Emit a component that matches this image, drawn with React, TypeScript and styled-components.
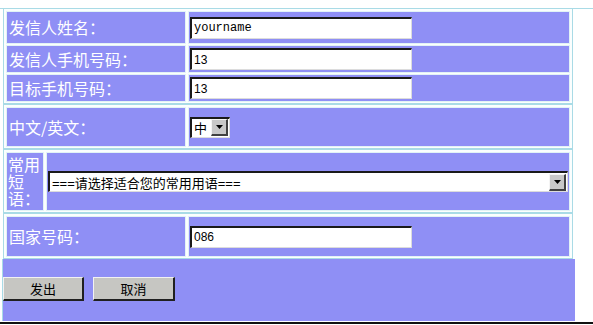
import styled, { createGlobalStyle } from "styled-components";

const GlobalStyle = createGlobalStyle`
  body {
    margin: 0;
    background: #ffffff;
    font-family: "Noto Sans CJK SC", "Liberation Sans", sans-serif;
  }
`;

const purple = "#8f8ff5";
const edge = "#a9dbe6";

const Page = styled.div`
  width: 593px;
  height: 325px;
  overflow: hidden;
  padding-top: 8px;
  box-sizing: border-box;
  display: flex;
  flex-direction: column;
  position: relative;
`;

const TopRule = styled.div`
  position: absolute;
  top: 8px;
  left: 0;
  right: 0;
  height: 1px;
  background: ${edge};
`;

const Section = styled.div<{ $labelWidth?: number }>`
  margin-left: 3px;
  width: 570px;
  box-sizing: border-box;
  border: 1px solid ${edge};
  padding: 3px 3px 2px 3px;
  display: grid;
  grid-template-columns: ${(p) => p.$labelWidth ?? 178}px 1fr;
  column-gap: 4px;
  row-gap: 3px;
  background: #fbfefe;
  position: relative;
`;

const Cell = styled.div<{ $h: number }>`
  height: ${(p) => p.$h}px;
  background: ${purple};
  box-shadow: 0 0 0 1px #e2f3f6;
  display: flex;
  align-items: center;
`;

const Label = styled(Cell)`
  color: #ffffff;
  font-size: 16px;
  line-height: 17px;
  padding-left: 2px;
  box-sizing: border-box;
  white-space: nowrap;
`;

const NarrowLabel = styled(Cell)`
  color: #ffffff;
  font-size: 16px;
  line-height: 17px;
  padding-left: 1px;
  box-sizing: border-box;
  word-break: break-all;
`;

const Value = styled(Cell)`
  padding-left: 1px;
`;

const TextBox = styled.input<{ $mono?: boolean }>`
  width: 222px;
  height: 22px;
  box-sizing: border-box;
  border-style: solid;
  border-width: 2px 1px 1px 2px;
  border-color: #1a1a1a #dcdcdc #dcdcdc #1a1a1a;
  background: #ffffff;
  padding: 0 0 0 2px;
  margin: 0;
  font-family: ${(p) =>
    p.$mono ? '"Liberation Mono", monospace' : '"Liberation Sans", sans-serif'};
  font-size: 12px;
  color: #000;
  outline: none;
`;

const SelectBox = styled.div<{ $w: number }>`
  width: ${(p) => p.$w}px;
  height: 21px;
  box-sizing: border-box;
  border-style: solid;
  border-width: 2px 1px 1px 2px;
  border-color: #1a1a1a #dcdcdc #dcdcdc #1a1a1a;
  background: #ffffff;
  display: flex;
  align-items: center;
  justify-content: space-between;
  font-size: 13px;
  color: #000;
  padding-left: 2px;
`;

const SelectText = styled.span`
  font-family: "Liberation Sans", "Noto Sans CJK SC", sans-serif;
  white-space: nowrap;
`;

const ArrowBtn = styled.div`
  width: 17px;
  height: 17px;
  box-sizing: border-box;
  background: #c8c8c8;
  border-style: solid;
  border-width: 1px 2px 2px 1px;
  border-color: #f4f4f4 #404040 #404040 #f4f4f4;
  display: flex;
  align-items: center;
  justify-content: center;
  margin-right: 1px;
`;

const Arrow = () => (
  <svg width="7" height="4" viewBox="0 0 7 4">
    <polygon points="0,0 7,0 3.5,4" fill="#000" />
  </svg>
);

const ButtonBar = styled.div`
  margin-left: 2px;
  width: 573px;
  height: 62px;
  box-sizing: border-box;
  background: ${purple};
  border-left: 1px solid ${edge};
  display: flex;
  align-items: flex-start;
  padding-top: 18px;
  gap: 9px;
`;

const Button = styled.button<{ $w: number }>`
  width: ${(p) => p.$w}px;
  height: 24px;
  box-sizing: border-box;
  background: #c6c6c2;
  border-style: solid;
  border-width: 1px 2px 2px 1px;
  border-color: #f2f2f2 #202020 #202020 #f2f2f2;
  font-family: "Noto Sans CJK SC", sans-serif;
  font-size: 13px;
  color: #000;
  padding: 0;
  margin: 0;
`;

const BottomRule = styled.div`
  height: 2px;
  margin-top: 1px;
  background: #111111;
`;

export default function App() {
  return (
    <Page>
      <GlobalStyle />
      <TopRule />
      <Section>
        <Label $h={31}>发信人姓名：</Label>
        <Value $h={31}>
          <TextBox $mono defaultValue="yourname" />
        </Value>
        <Label $h={26}>发信人手机号码：</Label>
        <Value $h={26}>
          <TextBox defaultValue="13" />
        </Value>
        <Label $h={26}>目标手机号码：</Label>
        <Value $h={26}>
          <TextBox defaultValue="13" />
        </Value>
      </Section>
      <Section>
        <Label $h={38}>中文/英文：</Label>
        <Value $h={38}>
          <SelectBox $w={40}>
            <SelectText>中</SelectText>
            <ArrowBtn>
              <Arrow />
            </ArrowBtn>
          </SelectBox>
        </Value>
      </Section>
      <Section $labelWidth={36}>
        <NarrowLabel $h={57}>常用短语：</NarrowLabel>
        <Value $h={57}>
          <SelectBox $w={520}>
            <SelectText>===请选择适合您的常用用语===</SelectText>
            <ArrowBtn>
              <Arrow />
            </ArrowBtn>
          </SelectBox>
        </Value>
      </Section>
      <Section>
        <Label $h={39}>国家号码：</Label>
        <Value $h={39}>
          <TextBox defaultValue="086" />
        </Value>
      </Section>
      <ButtonBar>
        <Button $w={81}>发出</Button>
        <Button $w={82}>取消</Button>
      </ButtonBar>
      <BottomRule />
    </Page>
  );
}
